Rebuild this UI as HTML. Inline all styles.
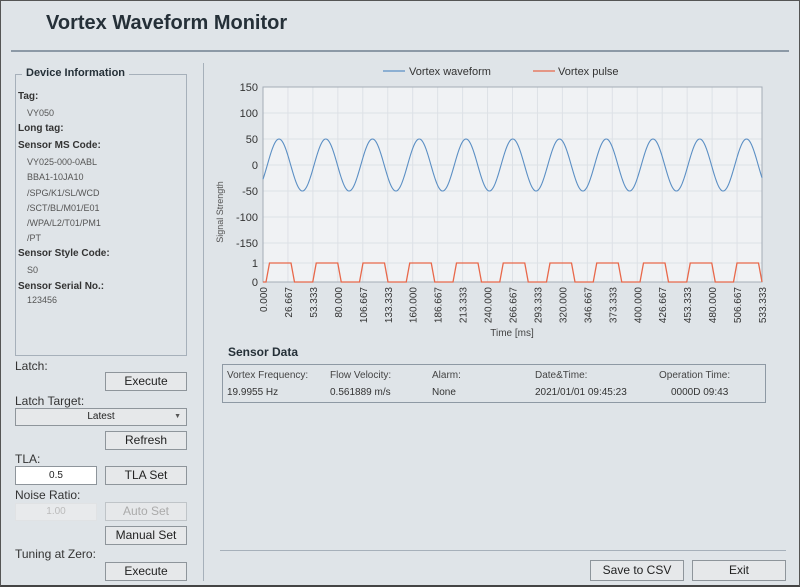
<!DOCTYPE html>
<html><head><meta charset="utf-8">
<style>
*{box-sizing:border-box;margin:0;padding:0}
body{width:800px;height:587px;background:#dfe4e8;font-family:"Liberation Sans",sans-serif;color:#222;position:relative;overflow:hidden}
.frame{position:absolute;left:0;top:0;width:800px;height:587px;border:1px solid #555;border-bottom:2px solid #444}
.abs{position:absolute;white-space:nowrap}
h1{position:absolute;left:46px;top:12px;font-size:20px;font-weight:bold;color:#253038}
.btn{position:absolute;background:#e6e8ea;border:1px solid #8e959b;font-size:12px;text-align:center;color:#222}
.lbl{position:absolute;font-size:12px;color:#333}
.fs{position:absolute;left:15px;top:74px;width:172px;height:282px;border:1px solid #a6b0ba}
.b{font-size:10px;font-weight:bold;color:#333;position:absolute;left:18px}
.v{font-size:9px;color:#555;position:absolute;left:27px}
</style></head><body>
<div class="frame"></div>
<h1>Vortex Waveform Monitor</h1>
<div class="abs" style="left:11px;top:50px;width:778px;height:2px;background:#8c99a6"></div>
<div class="abs" style="left:203px;top:63px;width:1px;height:518px;background:#a6b0ba"></div>

<div class="fs"></div>
<div class="abs" style="left:22px;top:67px;background:#dfe4e8;padding:0 4px;font-size:11px;font-weight:bold;color:#253038">Device Information</div>
<div class="b" style="top:91px">Tag:</div>
<div class="v" style="top:108px">VY050</div>
<div class="b" style="top:123px">Long tag:</div>
<div class="b" style="top:140px">Sensor MS Code:</div>
<div class="v" style="top:157px">VY025-000-0ABL</div>
<div class="v" style="top:172px">BBA1-10JA10</div>
<div class="v" style="top:188px">/SPG/K1/SL/WCD</div>
<div class="v" style="top:203px">/SCT/BL/M01/E01</div>
<div class="v" style="top:218px">/WPA/L2/T01/PM1</div>
<div class="v" style="top:233px">/PT</div>
<div class="b" style="top:248px">Sensor Style Code:</div>
<div class="v" style="top:265px">S0</div>
<div class="b" style="top:281px">Sensor Serial No.:</div>
<div class="v" style="top:295px">123456</div>

<div class="lbl" style="left:15px;top:359px">Latch:</div>
<div class="btn" style="left:105px;top:372px;width:82px;height:19px;line-height:17px">Execute</div>
<div class="lbl" style="left:15px;top:394px">Latch Target:</div>
<div class="btn" style="left:15px;top:408px;width:172px;height:18px;line-height:16px;font-size:10px">Latest<span style="position:absolute;right:5px;font-size:7px;color:#555">▼</span></div>
<div class="btn" style="left:105px;top:431px;width:82px;height:19px;line-height:17px">Refresh</div>
<div class="lbl" style="left:15px;top:452px">TLA:</div>
<div class="btn" style="left:15px;top:466px;width:82px;height:19px;line-height:17px;background:#fff;font-size:10px">0.5</div>
<div class="btn" style="left:105px;top:466px;width:82px;height:19px;line-height:17px">TLA Set</div>
<div class="lbl" style="left:15px;top:488px">Noise Ratio:</div>
<div class="btn" style="left:15px;top:503px;width:82px;height:18px;line-height:16px;background:#e8eaec;border-color:#e0e2e4;color:#bbb;font-size:10px">1.00</div>
<div class="btn" style="left:105px;top:502px;width:82px;height:19px;line-height:17px;border-color:#bfc4c8;color:#aaa">Auto Set</div>
<div class="btn" style="left:105px;top:526px;width:82px;height:19px;line-height:17px">Manual Set</div>
<div class="lbl" style="left:15px;top:547px">Tuning at Zero:</div>
<div class="btn" style="left:105px;top:562px;width:82px;height:19px;line-height:17px">Execute</div>

<svg class="abs" style="left:0;top:0" width="800" height="587" id="chart" font-family="Liberation Sans, sans-serif"></svg>

<div class="abs" style="left:228px;top:345px;font-size:12px;font-weight:bold;color:#253038">Sensor Data</div>
<div class="abs" style="left:222px;top:364px;width:544px;height:39px;border:1px solid #8e99a4"></div>
<div class="abs" style="left:227px;top:370px;font-size:10px;color:#444">Vortex Frequency:</div>
<div class="abs" style="left:330px;top:370px;font-size:10px;color:#444">Flow Velocity:</div>
<div class="abs" style="left:432px;top:370px;font-size:10px;color:#444">Alarm:</div>
<div class="abs" style="left:535px;top:370px;font-size:10px;color:#444">Date&amp;Time:</div>
<div class="abs" style="left:659px;top:370px;font-size:10px;color:#444">Operation Time:</div>
<div class="abs" style="left:227px;top:387px;font-size:10px;color:#333">19.9955 Hz</div>
<div class="abs" style="left:330px;top:387px;font-size:10px;color:#333">0.561889 m/s</div>
<div class="abs" style="left:432px;top:387px;font-size:10px;color:#333">None</div>
<div class="abs" style="left:535px;top:387px;font-size:10px;color:#333">2021/01/01 09:45:23</div>
<div class="abs" style="left:671px;top:387px;font-size:10px;color:#333">0000D 09:43</div>

<div class="abs" style="left:220px;top:550px;width:566px;height:1px;background:#a6b0ba"></div>
<div class="btn" style="left:590px;top:560px;width:94px;height:21px;line-height:19px">Save to CSV</div>
<div class="btn" style="left:692px;top:560px;width:94px;height:21px;line-height:19px">Exit</div>

<script>
var s=document.getElementById('chart'),h='';
var L=263,R=762,T=87,B=282;
h+='<rect x="'+L+'" y="'+T+'" width="'+(R-L)+'" height="'+(B-T)+'" fill="#f0f2f4"/>';
var ys=[[87,'150'],[113,'100'],[139,'50'],[165,'0'],[191,'-50'],[217,'-100'],[243,'-150'],[263,'1'],[282,'0']];
ys.forEach(function(y){h+='<line x1="'+L+'" x2="'+R+'" y1="'+y[0]+'" y2="'+y[0]+'" stroke="#dde1e6"/>';
h+='<text x="258" y="'+(y[0]+4)+'" font-size="11" text-anchor="end" fill="#333">'+y[1]+'</text>';});
for(var i=0;i<=20;i++){var x=L+i*(R-L)/20;h+='<line x1="'+x+'" x2="'+x+'" y1="'+T+'" y2="'+B+'" stroke="#dde1e6"/>';
var t=(i*80/3).toFixed(3);
h+='<text transform="translate('+(x+4)+',287) rotate(-90)" font-size="10" text-anchor="end" fill="#333">'+t+'</text>';}
h+='<rect x="'+L+'" y="'+T+'" width="'+(R-L)+'" height="'+(B-T)+'" fill="none" stroke="#a4adb6"/>';
var P=46.75,d='';
for(var x=L;x<=R;x+=0.5){var y=165-26*Math.cos(2*Math.PI*(x-L-16)/P);d+=(x==L?'M':'L')+x+','+y.toFixed(2);}
h+='<path d="'+d+'" fill="none" stroke="#5b8fc4" stroke-width="1.1"/>';
var p='M'+L+','+B;
for(var k=0;k<11;k++){var o=L+k*P;if(o+3>R)break;p+='L'+(o+3)+','+B+'L'+(o+6.5)+','+263+'L'+Math.min(o+28,R)+',263L'+Math.min(o+31.5,R)+','+B;}
h+='<path d="'+p+'" fill="none" stroke="#e8684a" stroke-width="1.3"/>';
h+='<line x1="383" x2="405" y1="71" y2="71" stroke="#5b8fc4" stroke-width="1.3"/><text x="409" y="75" font-size="11" fill="#333">Vortex waveform</text>';
h+='<line x1="533" x2="555" y1="71" y2="71" stroke="#e8684a" stroke-width="1.3"/><text x="558" y="75" font-size="11" fill="#333">Vortex pulse</text>';
h+='<text transform="translate(223,212) rotate(-90)" font-size="9" text-anchor="middle" fill="#555">Signal Strength</text>';
h+='<text x="512" y="336" font-size="10" text-anchor="middle" fill="#444">Time [ms]</text>';
s.innerHTML=h;
</script>
</body></html>
